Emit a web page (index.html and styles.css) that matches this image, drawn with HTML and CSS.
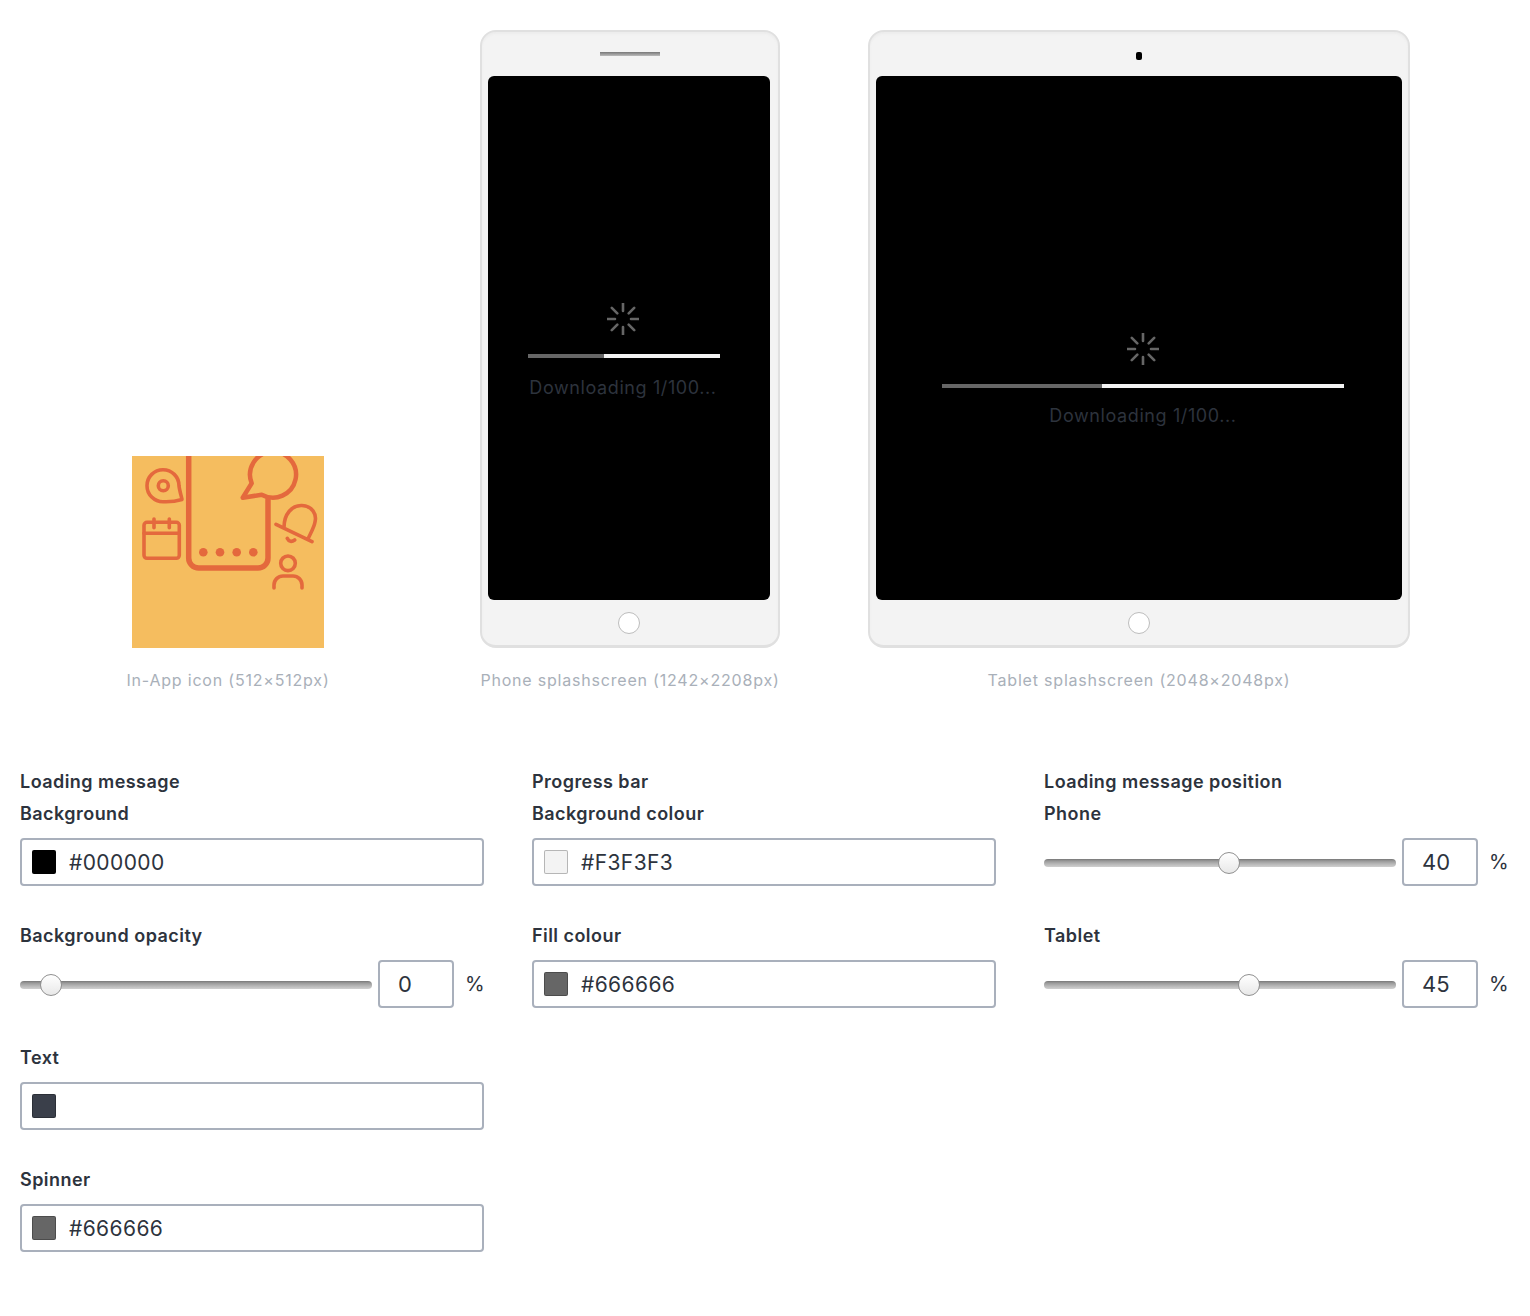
FILE: index.html
```html
<!DOCTYPE html>
<html>
<head>
    <meta charset="utf-8">
    <link rel="stylesheet" href="styles.css">
</head>
<body>
    <div class="previews">
        <div class="preview preview-icon">
            <svg class="appicon" viewBox="0 0 192 192" width="192" height="192">
                <rect width="192" height="192" fill="#f5bd5f"/>
                <g fill="none" stroke="#e4693d" stroke-linecap="round" stroke-linejoin="round">
                    <path stroke-width="5.5" d="M56.7 0V102a10 10 0 0 0 10 10H126a10 10 0 0 0 10-10V44"/>
                    <path stroke-width="4.5" d="M129.7 38.7L110.7 41.7L119.7 27.3A23 23 0 1 1 129.7 38.7Z"/>
                    <path stroke-width="3.6" d="M50 43.5C44 45.3 37 46 31 45.7A16 16 0 1 1 47 29.7C47.5 34 49 39 50 43.5Z"/>
                    <circle stroke-width="3.6" cx="31.3" cy="29.7" r="5"/>
                    <rect stroke-width="3.6" x="12" y="66.3" width="35.3" height="36" rx="3"/>
                    <path stroke-width="3.6" d="M12 77.3H47.3M22 63V71.7M37.3 63V71.7"/>
                    <path stroke-width="3.6" d="M144 68.3L180 85.7M152 71.5C152 58 160 49 170 49.5C180 50 185 58 183 66C182 72 178 78 176 83M155.3 82.3Q158 87.5 162.7 84"/>
                    <circle stroke-width="3.6" cx="156" cy="107.3" r="7.3"/>
                    <path stroke-width="3.6" d="M142 132V129a9 9 0 0 1 9-9H161a9 9 0 0 1 9 9V132"/>
                </g>
                <g fill="#e4693d">
                    <circle cx="71.3" cy="96.3" r="4.3"/>
                    <circle cx="88" cy="96.3" r="4.3"/>
                    <circle cx="104.7" cy="96.3" r="4.3"/>
                    <circle cx="121.3" cy="96.3" r="4.3"/>
                </g>
            </svg>
            <div class="caption">In-App icon (512×512px)</div>
        </div>

        <div class="preview preview-phone">
            <div class="device device-phone">
                <div class="device-top"><div class="speaker"></div></div>
                <div class="screen">
                    <div class="loader loader-phone">
                        <svg class="spinner" viewBox="0 0 32 32" width="32" height="32">
                            <path d="M16 0V8M16 24V32M0 16H8M24 16H32M4.8 4.8L10.3 10.3M21.7 21.7L27.2 27.2M4.8 27.2L10.3 21.7M21.7 10.3L27.2 4.8"/>
                        </svg>
                        <div class="bar bar-phone"><div class="bar-fill" style="width: 76px"></div></div>
                        <div class="loading-text">Downloading 1/100...</div>
                    </div>
                </div>
                <div class="device-bottom"><div class="home"></div></div>
            </div>
            <div class="caption">Phone splashscreen (1242×2208px)</div>
        </div>

        <div class="preview preview-tablet">
            <div class="device">
                <div class="device-top"><div class="camera"></div></div>
                <div class="screen">
                    <div class="loader loader-tablet">
                        <svg class="spinner" viewBox="0 0 32 32" width="32" height="32">
                            <path d="M16 0V8M16 24V32M0 16H8M24 16H32M4.8 4.8L10.3 10.3M21.7 21.7L27.2 27.2M4.8 27.2L10.3 21.7M21.7 10.3L27.2 4.8"/>
                        </svg>
                        <div class="bar bar-tablet"><div class="bar-fill" style="width: 160px"></div></div>
                        <div class="loading-text">Downloading 1/100...</div>
                    </div>
                </div>
                <div class="device-bottom"><div class="home"></div></div>
            </div>
            <div class="caption">Tablet splashscreen (2048×2048px)</div>
        </div>
    </div>

    <div class="settings">
        <div class="col">
            <div class="heading">Loading message</div>
            <div class="field">
                <div class="label">Background</div>
                <div class="colorbox"><span class="swatch swatch-black"></span>#000000</div>
            </div>
            <div class="field">
                <div class="label">Background opacity</div>
                <div class="sliderrow">
                    <div class="slider"><div class="thumb" style="left: 20px"></div></div>
                    <div class="numbox">0</div>
                    <div class="pct">%</div>
                </div>
            </div>
            <div class="field">
                <div class="label">Text</div>
                <div class="colorbox"><span class="swatch swatch-text"></span></div>
            </div>
            <div class="field">
                <div class="label">Spinner</div>
                <div class="colorbox"><span class="swatch swatch-grey"></span>#666666</div>
            </div>
        </div>

        <div class="col">
            <div class="heading">Progress bar</div>
            <div class="field">
                <div class="label">Background colour</div>
                <div class="colorbox"><span class="swatch swatch-light"></span>#F3F3F3</div>
            </div>
            <div class="field">
                <div class="label">Fill colour</div>
                <div class="colorbox"><span class="swatch swatch-grey"></span>#666666</div>
            </div>
        </div>

        <div class="col">
            <div class="heading">Loading message position</div>
            <div class="field">
                <div class="label">Phone</div>
                <div class="sliderrow">
                    <div class="slider"><div class="thumb" style="left: 174px"></div></div>
                    <div class="numbox">40</div>
                    <div class="pct">%</div>
                </div>
            </div>
            <div class="field">
                <div class="label">Tablet</div>
                <div class="sliderrow">
                    <div class="slider"><div class="thumb" style="left: 194px"></div></div>
                    <div class="numbox">45</div>
                    <div class="pct">%</div>
                </div>
            </div>
        </div>
    </div>
</body>
</html>
```

FILE: styles.css
```css
* {
    box-sizing: border-box;
}
body {
    margin: 0;
    padding: 30px 20px 0;
    font-family: Inter, "Liberation Sans", sans-serif;
    color: #2d333d;
    background-color: #fff;
}

/* previews */
.previews {
    display: flex;
    align-items: flex-end;
}
.preview {
    display: flex;
    flex-direction: column;
    align-items: center;
}
.preview-icon {
    width: 416px;
    margin-right: 44px;
}
.preview-phone {
    width: 300px;
    margin-right: 88px;
}
.preview-tablet {
    width: 542px;
}
.appicon {
    display: block;
}
.caption {
    margin-top: 21px;
    height: 22px;
    line-height: 22px;
    font-size: 16px;
    letter-spacing: 0.8px;
    color: #a9b0b9;
    white-space: nowrap;
}
.device {
    width: 100%;
    height: 618px;
    padding: 0 6px;
    background-color: #f3f3f3;
    border: 2px solid #e0e0e0;
    border-bottom-width: 3px;
    border-radius: 16px;
    box-shadow: inset 0 2px 2px #ececec;
}
.device-phone {
    padding-right: 8px;
}
.device-top {
    height: 44px;
    display: flex;
    align-items: center;
    justify-content: center;
}
.speaker {
    width: 60px;
    height: 4px;
    margin-left: 2px;
    background: linear-gradient(#777, #bbb);
}
.camera {
    width: 6px;
    height: 8px;
    background-color: #000;
    border-radius: 2px;
    margin-top: 4px;
}
.screen {
    height: 524px;
    background-color: #000;
    border-radius: 6px;
}
.device-bottom {
    height: 45px;
    display: flex;
    align-items: center;
    justify-content: center;
}
.home {
    width: 22px;
    height: 22px;
    background-color: #fff;
    border: 1px solid #bdbdbd;
    border-radius: 50%;
}

/* loader inside the screens */
.loader {
    display: flex;
    flex-direction: column;
    align-items: center;
}
.loader-phone {
    width: 192px;
    margin-left: 40px;
    padding-top: 227px;
}
.loader-phone .spinner,
.loader-phone .loading-text {
    margin-right: 2px;
}
.loader-tablet {
    width: 402px;
    margin-left: 66px;
    padding-top: 257px;
}
.spinner {
    display: block;
    fill: none;
    stroke: #666;
    stroke-width: 2.6;
    stroke-linecap: round;
}
.bar {
    height: 4px;
    background-color: #f3f3f3;
    margin-top: 19px;
    margin-bottom: 18px;
}
.bar-phone {
    width: 192px;
}
.bar-tablet {
    width: 402px;
    margin-bottom: 16px;
}
.bar-fill {
    height: 4px;
    background-color: #666;
}
.loading-text {
    height: 24px;
    line-height: 24px;
    font-size: 18px;
    letter-spacing: 0.6px;
    color: #2d333d;
    white-space: nowrap;
}

/* settings */
.settings {
    display: grid;
    grid-template-columns: repeat(3, 464px);
    column-gap: 48px;
    margin-top: 75px;
}
.heading {
    height: 32px;
    line-height: 32px;
    font-size: 18px;
    font-weight: 600;
    letter-spacing: 0.45px;
}
.field {
    margin-bottom: 34px;
}
.label {
    height: 32px;
    line-height: 32px;
    font-size: 18px;
    font-weight: 600;
    letter-spacing: 0.45px;
    margin-bottom: 8px;
}
.colorbox {
    height: 48px;
    display: flex;
    align-items: center;
    padding-left: 10px;
    font-size: 21px;
    letter-spacing: 0.4px;
    background-color: #fff;
    border: 2px solid #a9b0bc;
    border-radius: 4px;
}
.swatch {
    width: 24px;
    height: 24px;
    margin-right: 13px;
    border-radius: 2px;
    border: 1px solid rgba(0, 0, 0, 0.25);
}
.swatch-black {
    background-color: #000;
}
.swatch-text {
    background-color: #3a3f4a;
}
.swatch-grey {
    background-color: #666;
}
.swatch-light {
    background-color: #f3f3f3;
}
.sliderrow {
    height: 48px;
    display: flex;
    align-items: center;
}
.slider {
    position: relative;
    flex: none;
    width: 352px;
    height: 8px;
    margin-top: 2px;
    margin-right: 6px;
    border-radius: 4px;
    background: linear-gradient(#777 0, #999 25%, #b5b5b5 60%, #d0d0d0 100%);
}
.thumb {
    position: absolute;
    top: -7px;
    width: 22px;
    height: 22px;
    border: 1.5px solid #909090;
    border-radius: 50%;
    background: linear-gradient(#fff, #e8e8e8);
}
.numbox {
    flex: none;
    width: 76px;
    height: 48px;
    line-height: 44px;
    padding-left: 18px;
    font-size: 22px;
    border: 2px solid #a9b0bc;
    border-radius: 4px;
}
.pct {
    flex: none;
    margin-left: 11px;
    font-size: 20px;
}
```
